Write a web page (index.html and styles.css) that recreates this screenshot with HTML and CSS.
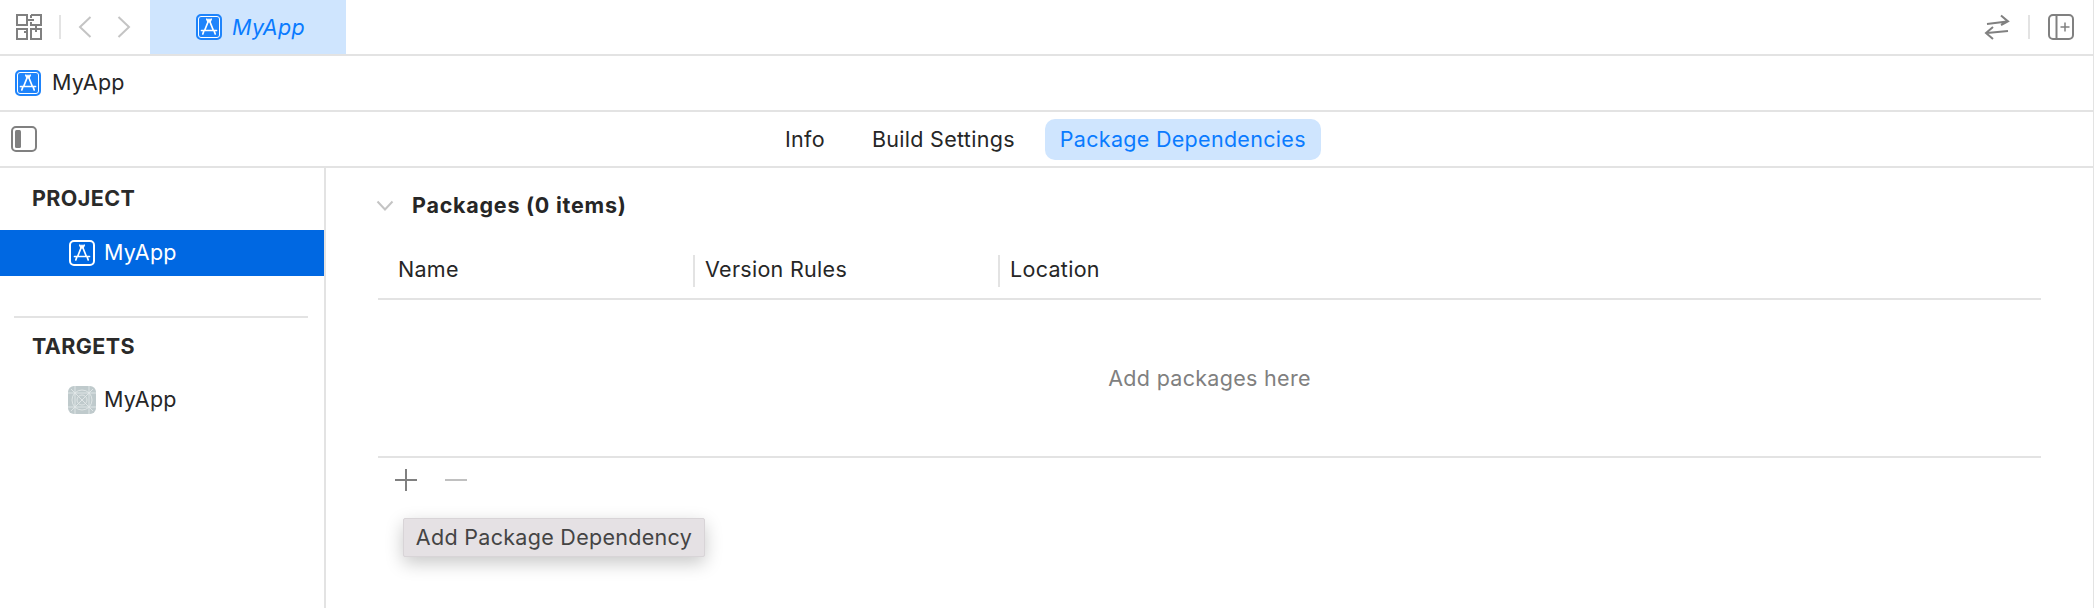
FILE: index.html
```html
<!DOCTYPE html>
<html lang="en">
<head>
  <meta charset="UTF-8" />
  <title>MyApp - Package Dependencies</title>
  <link rel="stylesheet" href="styles.css">
</head>
<body>
  <svg class="defs" width="0" height="0">
    <symbol id="app-glyph" viewBox="0 0 22 22">
      <path d="M11 3.5 L6.8 14 M11 3.5 L15.2 14 M8.8 3.2 L10.2 6 M13.2 3.2 L11.8 6 M3.5 14.5 H18.5 M6 14.5 L4.8 18 M16 14.5 L17.2 18" fill="none" stroke="currentColor" stroke-width="1.7" stroke-linecap="round"/>
    </symbol>
  </svg>

  <div class="toolbar">
    <div class="toolbar-left">
      <svg class="icon-grid" width="26" height="26" viewBox="0 0 26 26" fill="none" stroke="#808080" stroke-width="2">
        <rect x="1" y="1" width="10" height="10"/>
        <path d="M15 1 H25 V11 H15 V8 M15 4 V1 M12 6 H18"/>
        <rect x="1" y="15" width="10" height="10"/>
        <path d="M8 18 H11 M15 15 H25 V25 H15 Z M20 12 V18"/>
      </svg>
      <span class="vline"></span>
      <svg class="nav-arrow" width="14" height="22" viewBox="0 0 14 22" fill="none" stroke="#c4c4c4" stroke-width="2"><path d="M12.5 1 L2 11 L12.5 21"/></svg>
      <svg class="nav-arrow" width="14" height="22" viewBox="0 0 14 22" fill="none" stroke="#c4c4c4" stroke-width="2"><path d="M1.5 1 L12 11 L1.5 21"/></svg>
    </div>
    <div class="file-tab">
      <span class="app-icon"><svg width="22" height="22"><use href="#app-glyph"/></svg></span>
      <span>MyApp</span>
    </div>
    <div class="toolbar-right">
      <svg width="26" height="26" viewBox="0 0 26 26" fill="none" stroke="#808080" stroke-width="2">
        <path d="M3 10 L23 7.5 M17 1.5 L24 7.4 L17 11"/>
        <path d="M24 17 L3 19 M9 13 L2 19 L9 25"/>
      </svg>
      <span class="vline"></span>
      <svg width="26" height="26" viewBox="0 0 26 26" fill="none" stroke="#808080" stroke-width="2">
        <rect x="1" y="1" width="24" height="24" rx="4"/>
        <path d="M8.5 1 V25"/>
        <path d="M17 8.5 V17.5 M12.5 13 H21.5" stroke-width="1.5"/>
      </svg>
    </div>
  </div>

  <div class="breadcrumb">
    <span class="app-icon"><svg width="22" height="22"><use href="#app-glyph"/></svg></span>
    <span class="label">MyApp</span>
  </div>

  <div class="tabbar">
    <svg class="icon-sidebar" width="26" height="26" viewBox="0 0 26 26">
      <rect x="1" y="1" width="24" height="24" rx="4" fill="none" stroke="#808080" stroke-width="2"/>
      <rect x="4" y="4" width="6" height="18" rx="1.5" fill="#808080"/>
    </svg>
    <nav class="tabs">
      <span class="tab">Info</span>
      <span class="tab">Build Settings</span>
      <span class="tab active">Package Dependencies</span>
    </nav>
  </div>

  <div class="main">
    <aside class="sidebar">
      <div class="side-title project-title">PROJECT</div>
      <div class="side-row selected">
        <span class="app-icon inverse"><svg width="22" height="22"><use href="#app-glyph"/></svg></span>
        <span class="label">MyApp</span>
      </div>
      <div class="side-divider"></div>
      <div class="side-title">TARGETS</div>
      <div class="side-row target-row">
        <svg class="target-icon" width="28" height="28" viewBox="0 0 28 28">
          <rect width="28" height="28" rx="6" fill="#bfcacc"/>
          <g fill="none" stroke="#e2e8e9" stroke-width="0.9">
            <path d="M7 0 V28 M21 0 V28 M0 7 H28 M0 21 H28 M3 3 L25 25 M25 3 L3 25"/>
            <circle cx="14" cy="14" r="10"/>
            <circle cx="14" cy="14" r="5"/>
          </g>
        </svg>
        <span class="label">MyApp</span>
      </div>
    </aside>

    <section class="content">
      <div class="section-head">
        <svg width="18" height="12" viewBox="0 0 18 12" fill="none" stroke="#c4c4c4" stroke-width="2"><path d="M1.5 1.5 L9 9.5 L16.5 1.5"/></svg>
        <span class="label">Packages (0 items)</span>
      </div>
      <div class="table-head">
        <div class="col col-name">Name</div>
        <div class="col col-rules">Version Rules</div>
        <div class="col col-location">Location</div>
      </div>
      <div class="table-empty">Add packages here</div>
      <div class="table-actions">
        <svg width="22" height="22" viewBox="0 0 22 22" stroke="#808080" stroke-width="2"><path d="M11 0 V22 M0 11 H22"/></svg>
        <svg width="22" height="22" viewBox="0 0 22 22" stroke="#c0c0c0" stroke-width="2"><path d="M0 11 H22"/></svg>
      </div>
      <div class="tooltip">Add Package Dependency</div>
    </section>
  </div>
</body>
</html>
```

FILE: styles.css
```css
* {
  margin: 0;
  padding: 0;
  box-sizing: border-box;
}
html, body {
  height: 100%;
  overflow: hidden;
}
body {
  background: #fff;
  color: #262626;
  font-family: 'Inter', 'Liberation Sans', sans-serif;
  font-size: 21.5px;
  letter-spacing: 0.3px;
  display: flex;
  flex-direction: column;
  border-right: 1px solid #e3e3e3;
}
.defs {
  position: absolute;
}
.label {
  padding-bottom: 2px;
}
.toolbar {
  height: 56px;
  flex: none;
  display: flex;
  border-bottom: 2px solid #e3e3e3;
}
.toolbar-left {
  width: 150px;
  flex: none;
  display: flex;
  align-items: center;
  padding-left: 16px;
}
.toolbar-left svg {
  flex: none;
}
.vline {
  width: 2px;
  height: 24px;
  flex: none;
  background: #e3e3e3;
}
.toolbar-left .vline {
  margin: 0 17px;
}
.nav-arrow {
  margin-right: 25px;
}
.nav-arrow:last-child {
  margin-right: 0;
}
.file-tab {
  width: 196px;
  padding-left: 5px;
  background: #cfe5fe;
  color: #0a7bff;
  font-style: italic;
  display: flex;
  align-items: center;
  justify-content: center;
  gap: 10px;
}
.toolbar-right {
  margin-left: auto;
  display: flex;
  align-items: center;
  gap: 18px;
  padding-right: 19px;
}
.app-icon {
  width: 26px;
  height: 26px;
  flex: none;
  border-radius: 5px;
  background: #1f84fb;
  color: #fff;
  border: 2px solid #1f84fb;
  box-shadow: inset 0 0 0 1px #fff;
  display: flex;
  align-items: center;
  justify-content: center;
}
.app-icon.inverse {
  background: #0068e2;
  border-color: #fff;
  box-shadow: none;
}
.breadcrumb {
  height: 56px;
  flex: none;
  display: flex;
  align-items: center;
  gap: 11px;
  padding-left: 15px;
  border-bottom: 2px solid #e3e3e3;
}
.tabbar {
  height: 56px;
  flex: none;
  display: flex;
  align-items: center;
  padding-left: 11px;
  border-bottom: 2px solid #e3e3e3;
}
.tabs {
  display: flex;
  align-items: center;
  margin-left: 735px;
}
.tab {
  height: 41px;
  line-height: 41px;
  padding: 0 13px;
  margin-right: 21px;
  border-radius: 10px;
}
.tab:nth-child(2) {
  margin-right: 17px;
}
.tab.active {
  margin-right: 0;
  padding: 0 15px;
  background: #cfe5fe;
  color: #0a7bff;
}
.main {
  flex: 1;
  display: flex;
  min-height: 0;
}
.sidebar {
  width: 326px;
  flex: none;
  border-right: 2px solid #e3e3e3;
}
.side-title {
  font-weight: 700;
  letter-spacing: 0.4px;
  height: 56px;
  line-height: 56px;
  padding-left: 32px;
  color: #2a2a2a;
}
.project-title {
  height: 62px;
  line-height: 60px;
}
.side-row {
  height: 46px;
  display: flex;
  align-items: center;
  gap: 9px;
  padding-left: 69px;
}
.side-row.selected {
  background: #0068e2;
  color: #fff;
}
.target-row {
  margin-top: 3px;
}
.target-icon {
  flex: none;
  margin: 0 -1px;
}
.side-divider {
  height: 2px;
  margin: 40px 16px 0 14px;
  background: #e3e3e3;
}
.content {
  flex: 1;
  position: relative;
  padding: 0 52px;
}
.section-head {
  height: 76px;
  display: flex;
  align-items: center;
  gap: 18px;
  margin-left: -2px;
  font-weight: 700;
  letter-spacing: 0.75px;
}
.table-head {
  height: 56px;
  display: flex;
  align-items: center;
  border-bottom: 2px solid #e3e3e3;
}
.col {
  height: 32px;
  line-height: 28px;
  padding-left: 10px;
}
.col-name {
  width: 315px;
  padding-left: 20px;
}
.col-rules, .col-location {
  width: 305px;
  border-left: 2px solid #e3e3e3;
}
.table-empty {
  height: 158px;
  line-height: 156px;
  text-align: center;
  color: #808080;
  border-bottom: 2px solid #e3e3e3;
}
.table-actions {
  display: flex;
  gap: 28px;
  padding: 11px 0 0 17px;
}
.tooltip {
  position: absolute;
  left: 77px;
  top: 350px;
  width: 302px;
  height: 39px;
  line-height: 37px;
  text-align: center;
  background: #e5e1e4;
  color: #444;
  border: 1px solid #d8d4d7;
  border-radius: 2px;
  box-shadow: 0 6px 18px rgba(0,0,0,0.22);
}
```
